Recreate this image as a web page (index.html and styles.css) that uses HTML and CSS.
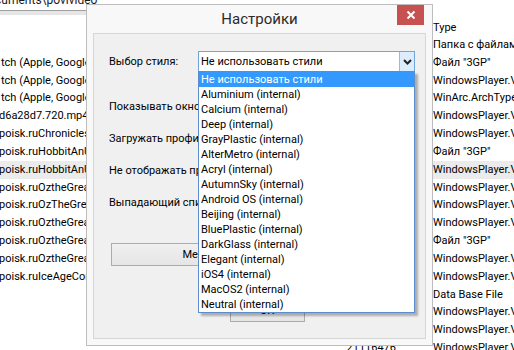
FILE: index.html
```html
<!DOCTYPE html>
<html lang="ru">
<head>
<meta charset="utf-8">
<title>Настройки</title>
<link rel="stylesheet" href="styles.css">
</head>
<body>
<div class="explorer">
  <div class="path">C:\Users\user\Documents\povivideo</div>
  <div class="hbar"></div>
  <div class="table">
    <div class="row head"><span class="c-name"></span><span class="c-size"></span><span class="c-type">Type</span></div>
    <div class="row"><span class="c-name"></span><span class="c-size"></span><span class="c-type">Папка с файлами</span></div>
    <div class="row"><span class="c-name">tch (Apple, Google Play).3gp</span><span class="c-size"></span><span class="c-type">Файл "3GP"</span></div>
    <div class="row"><span class="c-name">tch (Apple, Google Play).mp4</span><span class="c-size"></span><span class="c-type">WindowsPlayer.VideoFile</span></div>
    <div class="row"><span class="c-name">tch (Apple, Google Play).zip</span><span class="c-size"></span><span class="c-type">WinArc.ArchType</span></div>
    <div class="row"><span class="c-name cut">d6a28d7.720.mp4</span><span class="c-size"></span><span class="c-type">WindowsPlayer.VideoFile</span></div>
    <div class="row"><span class="c-name cut">poisk.ruChroniclesIII.mp4</span><span class="c-size"></span><span class="c-type">WindowsPlayer.VideoFile</span></div>
    <div class="row"><span class="c-name cut">poisk.ruHobbitAnUnexpected.3gp</span><span class="c-size"></span><span class="c-type">Файл "3GP"</span></div>
    <div class="row sel"><span class="c-name cut">poisk.ruHobbitAnUnexpected.mp4</span><span class="c-size"></span><span class="c-type">WindowsPlayer.VideoFile</span></div>
    <div class="row"><span class="c-name cut">poisk.ruOztheGreatandPowerful.mp4</span><span class="c-size"></span><span class="c-type">WindowsPlayer.VideoFile</span></div>
    <div class="row"><span class="c-name cut">poisk.ruOzTheGreatAndPowerful.mp4</span><span class="c-size"></span><span class="c-type">WindowsPlayer.VideoFile</span></div>
    <div class="row"><span class="c-name cut">poisk.ruOztheGreatandPowerful2.mp4</span><span class="c-size"></span><span class="c-type">WindowsPlayer.VideoFile</span></div>
    <div class="row"><span class="c-name cut">poisk.ruOztheGreatandPowerful.3gp</span><span class="c-size"></span><span class="c-type">Файл "3GP"</span></div>
    <div class="row"><span class="c-name cut">poisk.ruOztheGreatandPowerful3.mp4</span><span class="c-size"></span><span class="c-type">WindowsPlayer.VideoFile</span></div>
    <div class="row"><span class="c-name cut">poisk.ruIceAgeContinentalDrift.mp4</span><span class="c-size"></span><span class="c-type">WindowsPlayer.VideoFile</span></div>
    <div class="row"><span class="c-name"></span><span class="c-size"></span><span class="c-type">Data Base File</span></div>
    <div class="row"><span class="c-name"></span><span class="c-size"></span><span class="c-type">WindowsPlayer.VideoFile</span></div>
    <div class="row"><span class="c-name"></span><span class="c-size"></span><span class="c-type">WindowsPlayer.VideoFile</span></div>
    <div class="row"><span class="c-name"></span><span class="c-size">21116476</span><span class="c-type">WindowsPlayer.VideoFile</span></div>
  </div>
</div>

<div class="dialog">
  <div class="titlebar">
    <span></span>
    <span class="title">Настройки</span>
    <span class="close"><svg width="10" height="10" viewBox="0 0 10 10"><path d="M1.5 1.5 L8.5 8.5 M8.5 1.5 L1.5 8.5" stroke="#fff" stroke-width="2" fill="none"/></svg></span>
  </div>
  <div class="panel">
    <div class="row-style">
      <span class="label">Выбор стиля:</span>
      <div class="combo">
        <span class="combo-text">Не использовать стили</span>
        <span class="combo-btn"><svg width="9" height="6" viewBox="0 0 9 6"><path d="M1 1 L4.5 4.5 L8 1" stroke="#222" stroke-width="2" fill="none"/></svg></span>
        <ul class="list">
          <li class="active">Не использовать стили</li>
          <li>Aluminium (internal)</li>
          <li>Calcium (internal)</li>
          <li>Deep (internal)</li>
          <li>GrayPlastic (internal)</li>
          <li>AlterMetro (internal)</li>
          <li>Acryl (internal)</li>
          <li>AutumnSky (internal)</li>
          <li>Android OS (internal)</li>
          <li>Beijing (internal)</li>
          <li>BluePlastic (internal)</li>
          <li>DarkGlass (internal)</li>
          <li>Elegant (internal)</li>
          <li>iOS4 (internal)</li>
          <li>MacOS2 (internal)</li>
          <li>Neutral (internal)</li>
        </ul>
      </div>
    </div>
    <div class="opt opt-first">Показывать окно при запуске</div>
    <div class="opt">Загружать профиль при старте</div>
    <div class="opt">Не отображать предупреждения</div>
    <div class="opt">Выпадающий список стилей</div>
    <button class="btn btn-wide">Менеджер стилей</button>
    <button class="btn btn-ok">OK</button>
  </div>
</div>
</body>
</html>
```

FILE: styles.css
```css
* { box-sizing: border-box; }
html, body { margin: 0; padding: 0; }
body {
  width: 514px;
  height: 350px;
  overflow: hidden;
  position: relative;
  background: #fff;
  font-family: Roboto, "Noto Sans", sans-serif;
  font-size: 11px;
  color: #000;
}
.explorer { height: 350px; overflow: hidden; }
.path {
  margin-top: -8px;
  height: 18px;
  line-height: 16px;
  font-size: 12px;
  white-space: nowrap;
  padding-left: 0;
  margin-left: -99px;
  color: #1a1a1a;
}
.hbar {
  width: 300px;
  height: 5px;
  border-top: 1px solid #a0a0a0;
  background: #e6e6e6;
}
.table { display: flex; flex-direction: column; }
.row {
  display: grid;
  grid-template-columns: 300px 96px 1fr;
  height: 17.83px;
  line-height: 17.83px;
  white-space: nowrap;
}
.row.head { height: 21px; line-height: 21px; padding-top: 2px; }
.row.sel { background: #ebebeb; }
.row span { overflow: hidden; }
.c-name { padding-left: 1px; }
.c-name.cut { margin-left: -2px; }
.c-size { text-align: right; }
.c-type { padding-left: 37px; }

.dialog {
  position: absolute;
  left: 86px;
  top: 4px;
  width: 347px;
  height: 342px;
  border: 1px solid #bdbdbd;
  background: #f8f8f8;
  padding: 0 6px 6px;
  display: flex;
  flex-direction: column;
}
.titlebar {
  height: 28px;
  display: grid;
  grid-template-columns: 1fr auto 1fr;
}
.title {
  font-size: 15px;
  line-height: 28px;
  color: #2b2b2b;
}
.close {
  justify-self: end;
  width: 27px;
  height: 20px;
  margin-right: 2px;
  background: #c75050;
  display: flex;
  align-items: center;
  justify-content: center;
}
.close svg { display: block; }
.panel {
  flex: 1;
  border: 1px solid #d6d6d6;
  background: #f0f0f0;
  padding-left: 15px;
  display: flex;
  flex-direction: column;
  align-items: flex-start;
}
.row-style {
  margin-top: 17px;
  display: flex;
  align-items: center;
  height: 21px;
}
.label { width: 89px; white-space: nowrap; }
.combo {
  position: relative;
  width: 217px;
  height: 21px;
  border: 1px solid #6ea6dc;
  background: #fff;
  display: flex;
  align-items: center;
}
.combo-text { flex: 1; padding-left: 2px; white-space: nowrap; }
.combo-btn {
  width: 15px;
  height: 19px;
  background: #dcecfc;
  border-left: 1px solid #8cbdee;
  display: flex;
  align-items: center;
  justify-content: center;
}
.combo-btn svg { display: block; }
.list {
  position: absolute;
  left: -1px;
  top: 19px;
  width: 217px;
  margin: 0;
  padding: 0;
  list-style: none;
  background: #fff;
  border: 1px solid #5b8ccc;
  box-shadow: 3px 3px 2px rgba(0, 0, 0, 0.28);
  z-index: 5;
}
.list li {
  height: 15px;
  line-height: 15px;
  padding-left: 2px;
  white-space: nowrap;
}
.list li.active { background: #3399ff; color: #fff; }
.opt { height: 20px; line-height: 20px; white-space: nowrap; margin-top: 12px; }
.opt.opt-first { margin-top: 25px; }
.btn {
  font-family: inherit;
  font-size: 11px;
  color: #000;
  height: 23px;
  border: 1px solid #acacac;
  background: linear-gradient(#f0f0f0, #e5e5e5);
  padding: 0;
}
.btn-wide { margin-top: 30px; margin-left: 2px; width: 236px; }
.btn-ok { margin-top: 33px; align-self: center; width: 75px; }
```
